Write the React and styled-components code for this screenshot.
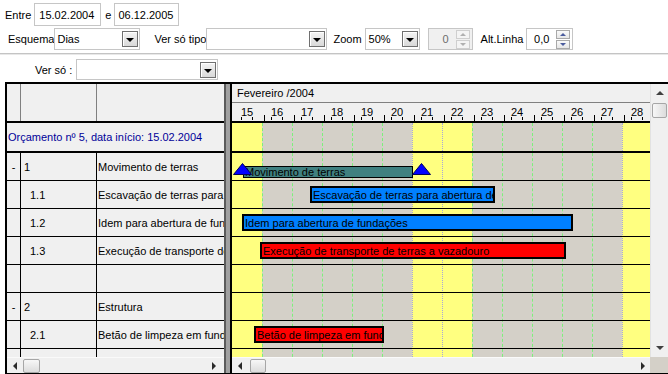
import React from 'react';
import styled, { createGlobalStyle } from 'styled-components';

const GlobalStyle = createGlobalStyle`
  html, body { margin: 0; padding: 0; background: #ffffff; }
  body {
    width: 668px; height: 374px; overflow: hidden;
    font-family: "Liberation Sans", Arial, sans-serif; font-size: 11px; color: #000;
  }
  *, *::before, *::after { box-sizing: border-box; }
`;

const Page = styled.div`
  width: 668px; height: 374px;
  display: flex; flex-direction: column;
`;

const ToolRow = styled.div`
  display: flex; align-items: center; flex-shrink: 0;
  height: ${p => p.$h}px;
  margin-top: ${p => p.$mt}px;
  padding-left: ${p => p.$pl}px;
`;

const Label = styled.span`
  margin-left: ${p => p.$ml || 0}px;
  white-space: nowrap;
`;

const Field = styled.div`
  display: flex; align-items: center;
  width: ${p => p.$w}px; height: 100%;
  margin-left: ${p => p.$ml || 0}px;
  border: 1px solid #c6c6c6;
  background: ${p => (p.$disabled ? '#f0f0f0' : '#ffffff')};
  color: ${p => (p.$disabled ? '#6d6d6d' : '#000')};
`;

const FieldText = styled.span`
  flex: 1;
  padding-left: ${p => p.$pl ?? 4}px;
  padding-right: ${p => p.$pr || 0}px;
  text-align: ${p => p.$align || 'left'};
  white-space: nowrap; overflow: hidden;
`;

const DropButton = styled.div`
  width: 16px; height: 16px; margin-right: 1px; flex-shrink: 0;
  border: 1px solid #707070;
  background: linear-gradient(#f4f4f4, #d9d9d9);
  box-shadow: inset 1px 1px 0 #ffffff;
  display: flex; align-items: center; justify-content: center;
  &::after {
    content: '';
    margin-top: 2px;
    border-left: 4px solid transparent;
    border-right: 4px solid transparent;
    border-top: 4px solid #000;
  }
`;

const Spin = styled.div`
  display: flex; flex-direction: column; gap: 1px;
  margin-right: 2px; flex-shrink: 0;
`;

const SpinBtn = styled.div`
  width: 14px; height: 9px;
  border: 1px solid ${p => (p.$disabled ? '#cfcfcf' : '#a9a9a9')};
  background: ${p => (p.$disabled ? '#f4f4f4' : 'linear-gradient(#fafafa, #e6e6e6)')};
  display: flex; align-items: center; justify-content: center;
  &::after {
    content: '';
    border-left: 3px solid transparent;
    border-right: 3px solid transparent;
    ${p => (p.$dir === 'up'
      ? `border-bottom: 3px solid ${p.$disabled ? '#b0b0b0' : '#4b5c9e'};`
      : `border-top: 3px solid ${p.$disabled ? '#b0b0b0' : '#4b5c9e'};`)}
  }
`;

const Divider = styled.div`
  flex-shrink: 0;
  height: 2px; margin-top: 3px;
  border-top: 1px solid #c4c4c4;
  border-bottom: 1px solid #e8e8e8;
`;

/* ---------- grid ---------- */

const Grid = styled.div`
  display: flex; flex-shrink: 0;
  margin-top: 2px; margin-left: 5px;
  width: 663px; height: 292px;
  border-top: 2px solid #000;
  border-left: 2px solid #000;
  border-bottom: 1px solid #000;
`;

const LeftPanel = styled.div`
  width: 217px; flex-shrink: 0;
  display: flex; flex-direction: column;
  overflow: hidden;
  background: #f0f0f0;
`;

const LeftHeader = styled.div`
  display: flex; flex-shrink: 0;
  height: 39px;
  border-bottom: 2px solid #000;
  background: #f0f0f0;
`;

const HeadCell = styled.div`
  width: ${p => (p.$w ? `${p.$w}px` : 'auto')};
  flex: ${p => (p.$w ? '0 0 auto' : '1')};
  border-right: ${p => (p.$w ? '1px solid #808080' : 'none')};
`;

const LeftBody = styled.div`
  flex: 1; overflow: hidden;
  display: flex; flex-direction: column;
`;

const BudgetRow = styled.div`
  height: 30px; flex-shrink: 0;
  display: flex; align-items: center;
  padding-left: 1px;
  border-bottom: 2px solid #000;
  color: #000099;
  white-space: nowrap;
`;

const TaskRow = styled.div`
  height: 28px; flex-shrink: 0;
  display: flex;
  border-bottom: 1px solid #000;
`;

const Cell = styled.div`
  width: ${p => (p.$w ? `${p.$w}px` : 'auto')};
  flex: ${p => (p.$w ? '0 0 auto' : '1')};
  min-width: 0;
  display: flex; align-items: center;
  justify-content: ${p => (p.$center ? 'center' : 'flex-start')};
  padding-left: ${p => p.$pl || 0}px;
  border-right: ${p => (p.$w ? '1px solid #000' : 'none')};
  white-space: nowrap; overflow: hidden;
`;

const HScroll = styled.div`
  height: 16px; flex-shrink: 0;
  display: flex; align-items: center;
  background: #f0f0f0;
  border-top: 1px solid #fafafa;
  padding: 0 ${p => p.$pr}px 0 ${p => p.$pl}px;
`;

const ArrowLeft = styled.div`
  width: 0; height: 0;
  border-top: 4px solid transparent;
  border-bottom: 4px solid transparent;
  border-right: 4px solid #2a2a2a;
`;

const ArrowRight = styled.div`
  width: 0; height: 0; margin-left: auto;
  border-top: 4px solid transparent;
  border-bottom: 4px solid transparent;
  border-left: 4px solid #2a2a2a;
`;

const Thumb = styled.div`
  width: ${p => p.$w}px; height: ${p => p.$h}px;
  margin-left: ${p => p.$ml || 0}px;
  margin-top: ${p => p.$mt || 0}px;
  border: 1px solid #a6a6a6;
  border-radius: 2px;
  background: linear-gradient(${p => (p.$vertical ? '90deg, ' : '')}#f7f7f7, #dcdcdc);
  flex-shrink: 0;
`;

const Splitter = styled.div`
  width: 8px; flex-shrink: 0;
  background: #a0a0a0;
  border-left: 2px solid #5a5a5a;
  border-right: 2px solid #000;
`;

const GanttPanel = styled.div`
  width: 418px; flex-shrink: 0;
  display: flex; flex-direction: column;
  overflow: hidden;
`;

const MonthRow = styled.div`
  height: 19px; flex-shrink: 0;
  display: flex; align-items: center;
  padding-left: 5px;
  background: #f0f0f0;
  border-bottom: 1px solid #808080;
`;

const DayRow = styled.div`
  height: 20px; flex-shrink: 0;
  display: flex;
  background: #f0f0f0;
  border-bottom: 2px solid #000;
`;

const DayCell = styled.div`
  position: relative;
  width: 30px; flex-shrink: 0;
  display: flex; justify-content: center;
  padding-top: 3px;
  &::before {
    content: '';
    position: absolute; bottom: 1px; left: 9px;
    width: 12px; height: 3px;
    border-left: 1px solid #000;
    border-right: 1px solid #000;
  }
  &::after {
    content: '';
    position: absolute; bottom: 0; left: 32px;
    width: 1px; height: 6px;
    background: #000;
  }
`;

const GanttBody = styled.div`
  flex: 1; overflow: hidden;
  display: grid;
  grid-template: 1fr / 1fr;
`;

const DayColumns = styled.div`
  grid-area: 1 / 1;
  display: flex;
`;

const DayCol = styled.div`
  width: 30px; flex-shrink: 0;
  background: ${p => (p.$weekend ? '#ffff80' : '#d4d0c8')};
  border-left: ${p => (p.$first ? 'none' : p.$weekend ? '1px dotted #a7a7d8' : '1px dashed #7cf07c')};
`;

const GanttRows = styled.div`
  grid-area: 1 / 1;
  display: flex; flex-direction: column;
  position: relative;
`;

const GanttRow = styled.div`
  position: relative; flex-shrink: 0;
  height: ${p => p.$h}px;
  border-bottom: ${p => p.$bw}px solid #000;
`;

const Bar = styled.div`
  position: absolute; top: 5px; height: 17px;
  background: ${p => p.$color};
  border: 2px solid #000;
  padding-left: 1px;
  display: flex; align-items: center;
  white-space: nowrap; overflow: hidden;
  font-size: 11px;
`;

const SummaryBar = styled.div`
  position: absolute; top: 13px; height: 12px;
  background: #408080;
  border: 1px solid #000;
  padding-left: 1px;
  display: flex; align-items: center;
  white-space: nowrap; overflow: hidden;
  line-height: 10px;
`;

const Marker = styled.svg`
  position: absolute; top: 10px;
  width: 19px; height: 12px;
  overflow: visible;
`;

const VScroll = styled.div`
  width: 18px; flex-shrink: 0;
  display: flex; flex-direction: column;
`;

const VTrack = styled.div`
  flex: 1;
  display: flex; flex-direction: column; align-items: center;
  background: #f0f0f0;
  border-left: 1px solid #e2e2e2;
`;

const ArrowUp = styled.div`
  width: 0; height: 0; margin-top: 7px;
  border-left: 4px solid transparent;
  border-right: 4px solid transparent;
  border-bottom: 4px solid #404040;
`;

const ArrowDown = styled.div`
  width: 0; height: 0; margin-top: auto; margin-bottom: 7px;
  border-left: 4px solid transparent;
  border-right: 4px solid transparent;
  border-top: 4px solid #404040;
`;

const Corner = styled.div`
  height: 16px; flex-shrink: 0;
  background: #d4d0c8;
`;

/* ---------- data ---------- */

const DAY = 30;
const days = [15, 16, 17, 18, 19, 20, 21, 22, 23, 24, 25, 26, 27, 28];
const weekend = new Set([15, 21, 22, 28]);

const tasks = [
  { exp: '-', code: '1', pl: 3, desc: 'Movimento de terras', summary: { left: 11, width: 170, marks: [10, 189] } },
  { code: '1.1', pl: 9, desc: 'Escavação de terras para abertura de fundações', bar: { left: 78, width: 185, color: '#0080ff' } },
  { code: '1.2', pl: 9, desc: 'Idem para abertura de fundações', bar: { left: 10, width: 331, color: '#0080ff' } },
  { code: '1.3', pl: 9, desc: 'Execução de transporte de terras a vazadouro', bar: { left: 28, width: 306, color: '#ff0000' } },
  { code: '', desc: '' },
  { exp: '-', code: '2', pl: 3, desc: 'Estrutura' },
  { code: '2.1', pl: 9, desc: 'Betão de limpeza em fundações', bar: { left: 22, width: 130, color: '#ff0000' } },
  { code: '', desc: '' },
];

function Combo({ w, ml, text, pl }) {
  return (
    <Field $w={w} $ml={ml}>
      <FieldText $pl={pl}>{text}</FieldText>
      <DropButton />
    </Field>
  );
}

function Spinner({ w, ml, value, disabled }) {
  return (
    <Field $w={w} $ml={ml} $disabled={disabled}>
      <FieldText $align="right" $pr={7}>{value}</FieldText>
      <Spin>
        <SpinBtn $dir="up" $disabled={disabled} />
        <SpinBtn $dir="down" $disabled={disabled} />
      </Spin>
    </Field>
  );
}

function Triangle({ cx }) {
  return (
    <Marker style={{ left: cx - 9.5 }} viewBox="0 0 19 12">
      <polygon points="9.5,0.5 18.5,11.5 0.5,11.5" fill="#0000ff" stroke="#00005a" strokeWidth="1" />
    </Marker>
  );
}

export default function App() {
  return (
    <Page>
      <GlobalStyle />
      <ToolRow $mt={3} $h={23} $pl={5}>
        <Label>Entre</Label>
        <Field $w={67} $ml={3}><FieldText $pl={4}>15.02.2004</FieldText></Field>
        <Label $ml={4}>e</Label>
        <Field $w={65} $ml={3}><FieldText $pl={3}>06.12.2005</FieldText></Field>
      </ToolRow>
      <ToolRow $mt={2} $h={22} $pl={8}>
        <Label>Esquema</Label>
        <Combo w={86} ml={0} text="Dias" pl={2} />
        <Label $ml={14}>Ver só tipo</Label>
        <Combo w={121} ml={0} text="" />
        <Label $ml={6}>Zoom</Label>
        <Combo w={55} ml={3} text="50%" pl={3} />
        <Spinner w={45} ml={8} value="0" disabled />
        <Label $ml={8}>Alt.Linha</Label>
        <Spinner w={47} ml={3} value="0,0" />
      </ToolRow>
      <Divider />
      <ToolRow $mt={4} $h={21} $pl={35}>
        <Label>Ver só :</Label>
        <Combo w={142} ml={4} text="" />
      </ToolRow>

      <Grid>
        <LeftPanel>
          <LeftHeader>
            <HeadCell $w={14} />
            <HeadCell $w={76} />
            <HeadCell />
          </LeftHeader>
          <LeftBody>
            <BudgetRow>Orçamento nº 5, data início: 15.02.2004</BudgetRow>
            {tasks.map((t, i) => (
              <TaskRow key={i}>
                <Cell $w={14} $center>{t.exp || ''}</Cell>
                <Cell $w={76} $pl={t.pl || 3}>{t.code}</Cell>
                <Cell $pl={1}>{t.desc}</Cell>
              </TaskRow>
            ))}
          </LeftBody>
          <HScroll $pl={6} $pr={8}>
            <ArrowLeft />
            <Thumb $w={17} $h={14} $ml={6} />
            <ArrowRight />
          </HScroll>
        </LeftPanel>

        <Splitter />

        <GanttPanel>
          <MonthRow>Fevereiro /2004</MonthRow>
          <DayRow>
            {days.map(d => (
              <DayCell key={d}>{d}</DayCell>
            ))}
          </DayRow>
          <GanttBody>
            <DayColumns>
              {days.map((d, i) => (
                <DayCol key={d} $weekend={weekend.has(d)} $first={i === 0} />
              ))}
            </DayColumns>
            <GanttRows>
              <GanttRow $h={30} $bw={2} />
              {tasks.map((t, i) => (
                <GanttRow key={i} $h={28} $bw={1}>
                  {t.summary && (
                    <>
                      <SummaryBar style={{ left: t.summary.left, width: t.summary.width }}>
                        {t.desc}
                      </SummaryBar>
                      {t.summary.marks.map(cx => <Triangle key={cx} cx={cx} />)}
                    </>
                  )}
                  {t.bar && (
                    <Bar $color={t.bar.color} style={{ left: t.bar.left, width: t.bar.width }}>
                      {t.desc}
                    </Bar>
                  )}
                </GanttRow>
              ))}
            </GanttRows>
          </GanttBody>
          <HScroll $pl={6} $pr={5}>
            <ArrowLeft />
            <Thumb $w={16} $h={14} $ml={8} />
            <ArrowRight />
          </HScroll>
        </GanttPanel>

        <VScroll>
          <VTrack>
            <ArrowUp />
            <Thumb $w={15} $h={15} $mt={8} $vertical />
            <ArrowDown />
          </VTrack>
          <Corner />
        </VScroll>
      </Grid>
    </Page>
  );
}
